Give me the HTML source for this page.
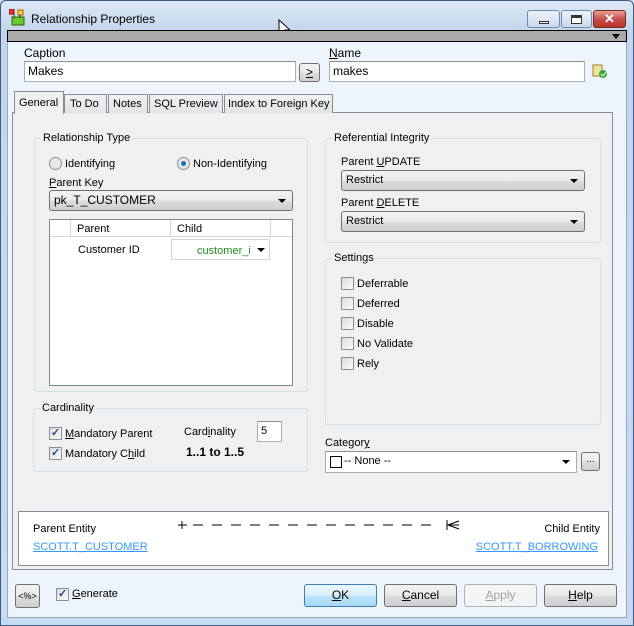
<!DOCTYPE html>
<html><head><style>
*{box-sizing:border-box;margin:0;padding:0}
body{width:634px;height:626px;position:relative;overflow:hidden;font-family:"Liberation Sans",sans-serif;font-size:11px;color:#000;background:#c9dcf1}
.a{position:absolute}
.t{position:absolute;white-space:nowrap;line-height:14px}
.inp{position:absolute;background:#fff;border:1px solid #abadb3;border-top-color:#8e8f8f;padding:2px 3px;line-height:14px}
.cb{position:absolute;border:1px solid #707070;border-radius:3px;background:linear-gradient(#f2f2f2,#ebebeb 50%,#dddddd 51%,#cfcfcf);padding:2px 4px;line-height:14px}
.arr{position:absolute;right:6px;top:8px;width:0;height:0;border-left:4px solid transparent;border-right:4px solid transparent;border-top:4px solid #000}
.grp{position:absolute;border:1px solid #d5dfe5;border-radius:3px}
.gl{position:absolute;top:-8px;left:6px;background:#f0f0f0;padding:0 2px;line-height:14px}
.chk{position:absolute;width:13px;height:13px;border:1px solid #8e8f8f;background:linear-gradient(135deg,#dcdcdc,#fbfbfb)}
.ck{position:absolute;left:1px;top:-1px;font-size:11px;line-height:12px;color:#2a4d8a;font-weight:bold}
.btn{position:absolute;border:1px solid #707070;border-radius:3px;background:linear-gradient(#f2f2f2,#ebebeb 50%,#dddddd 51%,#cfcfcf);text-align:center;line-height:21px;font-size:12px}
u{text-decoration:underline}
</style></head><body>
<div class="a" style="left:0;top:0;width:634px;height:626px;border:1px solid #3b5b80;border-radius:6px 6px 0 0;background:linear-gradient(#dce8f6,#c4d6ec 30px,#c6daf1)"></div>
<svg class="a" style="left:9px;top:9px" width="18" height="18"><rect x="0" y="0" width="5" height="5" fill="#e33" stroke="#900"/><rect x="9" y="1" width="5" height="5" fill="#fc3" stroke="#960"/><rect x="3" y="8" width="12" height="8" fill="#6c3" stroke="#360"/><path d="M5 5v4M11 6v3" stroke="#333"/></svg>
<div class="t" style="left:31px;top:12px;font-size:12px">Relationship Properties</div>
<div class="a" style="left:527px;top:10px;width:33px;height:18px;border:1px solid #6d8bb0;border-radius:3px;background:linear-gradient(#eef3fa,#c8d8ec)"><div class="a" style="left:11px;top:10px;width:10px;height:3px;background:#fff;border:1px solid #333"></div></div>
<div class="a" style="left:561px;top:10px;width:31px;height:18px;border:1px solid #6d8bb0;border-radius:3px;background:linear-gradient(#eef3fa,#c8d8ec)"><div class="a" style="left:9px;top:4px;width:11px;height:9px;border:1px solid #333;border-top-width:3px;background:#fff"></div></div>
<div class="a" style="left:593px;top:10px;width:33px;height:18px;border:1px solid #7a2b20;border-radius:3px;background:linear-gradient(#e8a090,#c75050 50%,#b93224);color:#fff;font-weight:bold;text-align:center;line-height:16px;font-size:13px">✕</div>
<svg class="a" style="left:278px;top:19px" width="12" height="20"><path d="M1 1v15l4-4 3 6 2-1-3-6h5z" fill="#fff" stroke="#000"/></svg>
<div class="a" style="left:7px;top:30px;width:620px;height:588px;background:#eef4fb;border:1px solid #95a9c4"></div>
<div class="a" style="left:7px;top:30px;width:620px;height:12px;background:#aaaaaa;border:1px solid #000"></div>
<div class="a" style="left:612px;top:34px;border-left:4px solid transparent;border-right:4px solid transparent;border-top:5px solid #000"></div>
<div class="t" style="left:24px;top:46px;font-size:12px">Caption</div>
<div class="inp" style="left:24px;top:61px;width:272px;height:21px;font-size:12px">Makes</div>
<div class="btn" style="left:299px;top:63px;width:21px;height:19px;line-height:16px"><u>&gt;</u></div>
<div class="t" style="left:329px;top:46px;font-size:12px"><u>N</u>ame</div>
<div class="inp" style="left:329px;top:61px;width:256px;height:21px;font-size:12px">makes</div>
<svg class="a" style="left:592px;top:63px" width="16" height="16"><rect x="1" y="2" width="9" height="11" fill="#f3e3a0" stroke="#a08020"/><circle cx="11" cy="11" r="4" fill="#3a3"/><path d="M9 11l2 2 3-4" stroke="#fff" fill="none"/></svg>
<div class="a" style="left:12px;top:112px;width:601px;height:458px;background:#f0f0f0;border:1px solid #898c95"></div>
<div class="a" style="left:14px;top:91px;width:50px;height:23px;background:#f0f0f0;border:1px solid #898c95;border-bottom:none"></div>
<div class="t" style="left:19px;top:96px">General</div>
<div class="a" style="left:64px;top:94px;width:43px;height:19px;background:linear-gradient(#f2f2f2,#e3e3e3);border:1px solid #898c95;border-bottom:none"></div>
<div class="t" style="left:70px;top:97px">To Do</div>
<div class="a" style="left:108px;top:94px;width:40px;height:19px;background:linear-gradient(#f2f2f2,#e3e3e3);border:1px solid #898c95;border-bottom:none"></div>
<div class="t" style="left:113px;top:97px">Notes</div>
<div class="a" style="left:149px;top:94px;width:74px;height:19px;background:linear-gradient(#f2f2f2,#e3e3e3);border:1px solid #898c95;border-bottom:none"></div>
<div class="t" style="left:154px;top:97px">SQL Preview</div>
<div class="a" style="left:224px;top:94px;width:109px;height:19px;background:linear-gradient(#f2f2f2,#e3e3e3);border:1px solid #898c95;border-bottom:none"></div>
<div class="t" style="left:228px;top:97px">Index to Foreign Key</div>
<div class="grp" style="left:34px;top:138px;width:274px;height:254px"><div class="gl">Relationship Type</div></div>
<div class="a" style="left:49px;top:157px;width:13px;height:13px;border:1px solid #8e8f8f;border-radius:50%;background:#e8e8e8"></div>
<div class="t" style="left:65px;top:157px">Identifying</div>
<div class="a" style="left:177px;top:157px;width:13px;height:13px;border:1px solid #8e8f8f;border-radius:50%;background:#e8e8e8"><div class="a" style="left:3px;top:3px;width:5px;height:5px;border-radius:50%;background:#1f6fb8"></div></div>
<div class="t" style="left:193px;top:157px">Non-Identifying</div>
<div class="t" style="left:49px;top:176px"><u>P</u>arent Key</div>
<div class="cb" style="left:49px;top:190px;width:244px;height:21px;font-size:12px">pk_T_CUSTOMER<div class="arr"></div></div>
<div class="a" style="left:49px;top:219px;width:244px;height:167px;background:#fff;border:1px solid #828790"></div>
<div class="a" style="left:50px;top:220px;width:242px;height:17px;border-bottom:1px solid #d5d5d5;background:#fff"></div>
<div class="a" style="left:70px;top:220px;width:1px;height:17px;background:#d5d5d5"></div>
<div class="a" style="left:170px;top:220px;width:1px;height:17px;background:#d5d5d5"></div>
<div class="a" style="left:270px;top:220px;width:1px;height:17px;background:#d5d5d5"></div>
<div class="t" style="left:77px;top:222px">Parent</div>
<div class="t" style="left:177px;top:222px">Child</div>
<div class="t" style="left:78px;top:243px">Customer ID</div>
<div class="a" style="left:171px;top:239px;width:99px;height:21px;border:1px solid #d5d5d5;background:#fff;overflow:hidden"><div class="t" style="left:25px;top:4px;color:#1f8a1f">customer_id</div><div class="a" style="left:78px;top:0;width:20px;height:19px;background:#fff"></div><div class="arr" style="right:4px"></div></div>
<div class="grp" style="left:33px;top:408px;width:275px;height:64px"><div class="gl">Cardinality</div></div>
<div class="chk" style="left:49px;top:427px"><span class="ck">✓</span></div>
<div class="t" style="left:65px;top:427px"><u>M</u>andatory Parent</div>
<div class="chk" style="left:49px;top:447px"><span class="ck">✓</span></div>
<div class="t" style="left:65px;top:447px">Mandatory C<u>h</u>ild</div>
<div class="t" style="left:184px;top:425px">Card<u>i</u>nality</div>
<div class="inp" style="left:257px;top:421px;width:25px;height:21px">5</div>
<div class="t" style="left:186px;top:445px;font-weight:bold;font-size:12px">1..1 to 1..5</div>
<div class="grp" style="left:325px;top:138px;width:276px;height:105px"><div class="gl">Referential Integrity</div></div>
<div class="t" style="left:341px;top:155px">Parent <u>U</u>PDATE</div>
<div class="cb" style="left:341px;top:170px;width:244px;height:21px">Restrict<div class="arr"></div></div>
<div class="t" style="left:341px;top:196px">Parent <u>D</u>ELETE</div>
<div class="cb" style="left:341px;top:211px;width:244px;height:21px">Restrict<div class="arr"></div></div>
<div class="grp" style="left:325px;top:258px;width:276px;height:167px"><div class="gl">Settings</div></div>
<div class="chk" style="left:341px;top:277px"></div><div class="t" style="left:357px;top:277px">Deferrable</div>
<div class="chk" style="left:341px;top:297px"></div><div class="t" style="left:357px;top:297px">Deferred</div>
<div class="chk" style="left:341px;top:317px"></div><div class="t" style="left:357px;top:317px">Disable</div>
<div class="chk" style="left:341px;top:337px"></div><div class="t" style="left:357px;top:337px">No Validate</div>
<div class="chk" style="left:341px;top:357px"></div><div class="t" style="left:357px;top:357px">Rely</div>
<div class="t" style="left:325px;top:436px">Categor<u>y</u></div>
<div class="inp" style="left:325px;top:451px;width:252px;height:22px;padding-left:18px">-- None --<div class="a" style="left:4px;top:4px;width:12px;height:12px;border:1px solid #000"></div><div class="arr" style="top:8px"></div></div>
<div class="btn" style="left:581px;top:452px;width:19px;height:19px;line-height:14px;font-size:10px">...</div>
<div class="a" style="left:18px;top:511px;width:591px;height:55px;background:#fff;border:1px solid #898c95"></div>
<div class="t" style="left:33px;top:522px">Parent Entity</div>
<div class="t" style="left:33px;top:540px;color:#3399ff;text-decoration:underline">SCOTT.T_CUSTOMER</div>
<div class="t" style="right:34px;top:522px">Child Entity</div>
<div class="t" style="right:36px;top:540px;color:#3399ff;text-decoration:underline">SCOTT.T_BORROWING</div>
<svg class="a" style="left:175px;top:518px" width="290" height="14"><path d="M3 7h9M7 3v8" stroke="#000"/><path d="M18 7h247" stroke="#000" stroke-dasharray="10,9"/><path d="M272 2v10M284 3l-11 4 11 4M272 7h12" stroke="#000" fill="none"/></svg>
<div class="btn" style="left:15px;top:584px;width:25px;height:24px;font-size:9px;line-height:22px">&lt;%&gt;</div>
<div class="chk" style="left:56px;top:588px"><span class="ck">✓</span></div>
<div class="t" style="left:72px;top:587px"><u>G</u>enerate</div>
<div class="btn" style="left:304px;top:584px;width:73px;height:23px;border-color:#3c7fb1;background:linear-gradient(#eaf6fd,#d9f0fc 50%,#bee6fd 51%,#a7d9f5)"><u>O</u>K</div>
<div class="btn" style="left:384px;top:584px;width:73px;height:23px"><u>C</u>ancel</div>
<div class="btn" style="left:464px;top:584px;width:73px;height:23px;border-color:#adb2b5;background:#f4f4f4;color:#a0a0a0"><u>A</u>pply</div>
<div class="btn" style="left:544px;top:584px;width:73px;height:23px"><u>H</u>elp</div>
</body></html>
